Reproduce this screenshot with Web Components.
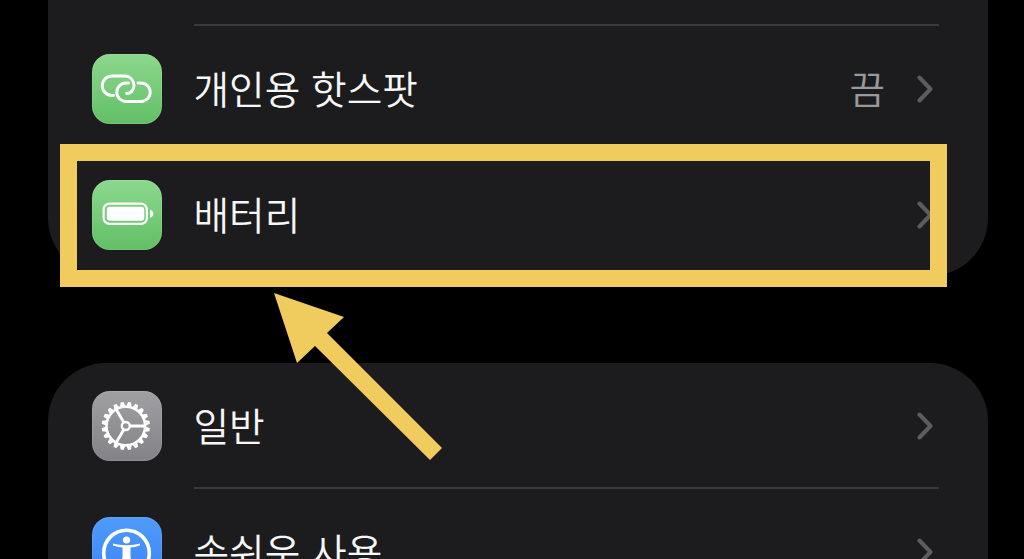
<!DOCTYPE html>
<html lang="ko">
<head>
<meta charset="utf-8">
<title>설정</title>
<style>
html, body { margin: 0; height: 100%; background: #000; overflow: hidden; }
</style>
</head>
<body>
<settings-screen>
  <settings-card class="first">
    <settings-row divider stub></settings-row>
    <settings-row label="개인용 핫스팟" value="끔"><app-icon slot="icon" kind="link"></app-icon></settings-row>
    <settings-row label="배터리"><app-icon slot="icon" kind="battery"></app-icon></settings-row>
  </settings-card>
  <settings-card>
    <settings-row label="일반" divider><app-icon slot="icon" kind="gear"></app-icon></settings-row>
    <settings-row label="손쉬운 사용"><app-icon slot="icon" kind="access"></app-icon></settings-row>
  </settings-card>
  <callout-mark slot="overlay"></callout-mark>
</settings-screen>

<script>
class SettingsScreen extends HTMLElement {
    constructor() {
        super();
        this.attachShadow({ mode: 'open' }).innerHTML = `
        <style>
        :host {
            display: flex;
            flex-direction: column;
            gap: 85px;
            position: relative;
            width: 1024px;
            height: 559px;
            padding: 0 36px 0 48px;
            box-sizing: border-box;
            overflow: hidden;
            background: #000;
            font-family: "Noto Sans CJK KR", "Noto Sans", sans-serif;
        }
        </style>
        <slot></slot>
        <slot name="overlay"></slot>`;
    }
}
customElements.define('settings-screen', SettingsScreen);

class SettingsCard extends HTMLElement {
    constructor() {
        super();
        this.attachShadow({ mode: 'open' }).innerHTML = `
        <style>
        :host {
            display: flex;
            flex-direction: column;
            flex: none;
            background: #1c1c1e;
            border-radius: 58px;
        }
        :host(.first) { border-radius: 0 0 58px 58px; height: 276px; margin-bottom: 2px; }
        </style>
        <slot></slot>`;
    }
}
customElements.define('settings-card', SettingsCard);

class SettingsRow extends HTMLElement {
    constructor() {
        super();
        this.attachShadow({ mode: 'open' });
    }

    connectedCallback() {
        this.render();
    }

    render() {
        var label = this.getAttribute('label') || '';
        var value = this.getAttribute('value');
        var stub = this.hasAttribute('stub');
        this.shadowRoot.innerHTML = `
        <style>
        :host {
            display: flex;
            flex: none;
            height: ${stub ? 26 : 126}px;
            padding-left: 43.5px;
        }
        .icon { flex: none; width: 70px; align-self: center; display: flex; }
        .body {
            flex: 1;
            display: flex;
            align-items: center;
            margin: 0 49px 0 32px;
            padding-right: 6px;
        }
        :host([divider]) .body { box-shadow: inset 0 -2px 0 #3a3a3c; }
        .label, .value { font-size: 38.7px; line-height: 48px; font-weight: 350; padding-bottom: 4px; white-space: nowrap; }
        .label { flex: 1; color: #f6f6f7; }
        .value { color: #98989d; margin-right: 32px; }
        svg { display: block; flex: none; }
        </style>
        <div class="icon"><slot name="icon"></slot></div>
        <div class="body">
            ${stub ? '' : `<span class="label">${label}</span>`}
            ${value ? `<span class="value">${value}</span>` : ''}
            ${stub ? '' : `<svg width="16" height="28" viewBox="0 0 16 28"><path d="M2.5 2.5 13.5 14 2.5 25.5" fill="none" stroke="#5d5d60" stroke-width="4" stroke-linecap="round" stroke-linejoin="round"/></svg>`}
        </div>`;
    }
}
customElements.define('settings-row', SettingsRow);

// 20 teeth, trapezoid, with the ring's hole cut out
function gearTeeth(cx, cy) {
    var d = '';
    var pt = (r, deg) => {
        var a = deg * Math.PI / 180;
        return (cx + r * Math.cos(a)).toFixed(2) + ' ' + (cy + r * Math.sin(a)).toFixed(2);
    };
    for (var i = 0; i < 20; i++) {
        var c = 9 + i * 18;
        d += (i ? 'L' : 'M') + pt(20.6, c - 7) + 'L' + pt(24.2, c - 3.6) + 'L' + pt(24.2, c + 3.6) + 'L' + pt(20.6, c + 7);
    }
    return d + `ZM${cx + 18} ${cy}A18 18 0 1 0 ${cx - 18} ${cy}A18 18 0 1 0 ${cx + 18} ${cy}Z`;
}

const ICONS = {
    link: `<g fill="none" stroke="#fff" stroke-width="2.900" stroke-linecap="round">
        <path d="M21.500 41.500H20A9.750 9.750 0 0 1 20 22H33C38 22 42 26.500 42 31.500C42 36.500 38.500 39.500 34.500 39.500"/>
        <path d="M36.500 29H34A9.250 9.250 0 0 0 34 47.500H49A9.250 9.250 0 0 0 49 29H46"/>
    </g>`,
    battery: `<rect x="11.600" y="23.600" width="43.300" height="20.300" rx="6" fill="none" stroke="#fff" stroke-width="2.200"/>
        <rect x="14.800" y="26.800" width="37.500" height="14" rx="3" fill="#fff"/>
        <path d="M58 29.500C60.500 30.800 61.500 32.300 61.500 33.800S60.500 36.800 58 38Z" fill="#fff"/>`,
    gear: `<path d="${gearTeeth(33.8, 35)}" fill="#fff" fill-rule="evenodd"/>
        <g fill="none" stroke="#fff">
        <circle cx="33.800" cy="35" r="4" stroke-width="2.400"/>
        <path d="M37.800 35H53M31.800 31.500 24 18M31.800 38.500 24 52" stroke-width="2.800"/>
    </g>`,
    access: `<circle cx="34.500" cy="36" r="22.800" fill="none" stroke="#fff" stroke-width="3.600"/>
        <circle cx="34.500" cy="23" r="3.600" fill="#fff"/>
        <path d="M21 28.500C25 29.800 28 30.500 30.500 30.500V40L27.500 53H31L34.500 43 38 53H41.500L38.500 40V30.500C41 30.500 44 29.800 48 28.500V26.500C44 27.800 39.500 28.200 34.500 28.200S25 27.800 21 26.500Z" fill="#fff"/>`
};
const ICON_FILLS = {
    link: ['#8cd88d', '#62bf66'],
    battery: ['#8cd88d', '#62bf66'],
    gear: ['#a0a0a3', '#838387'],
    access: ['#4f9bfb', '#3a82f6']
};

class AppIcon extends HTMLElement {
    constructor() {
        super();
        this.attachShadow({ mode: 'open' });
    }

    connectedCallback() {
        var kind = this.getAttribute('kind');
        var fill = ICON_FILLS[kind];
        this.shadowRoot.innerHTML = `
        <style>
        :host {
            display: block;
            width: 70px;
            height: 70px;
            border-radius: 18px;
            background: linear-gradient(${fill[0]}, ${fill[1]});
            box-shadow: inset 0 0 0 1px rgba(255,255,255,.1);
        }
        svg { display: block; }
        </style>
        <svg width="70" height="70" viewBox="0 0 70 70">${ICONS[kind]}</svg>`;
    }
}
customElements.define('app-icon', AppIcon);

// yellow box and arrow drawn over the list
class CalloutMark extends HTMLElement {
    constructor() {
        super();
        this.attachShadow({ mode: 'open' }).innerHTML = `
        <style>
        :host { display: block; position: absolute; left: 0; top: 0; width: 1024px; height: 559px; pointer-events: none; }
        svg { display: block; }
        </style>
        <svg width="1024" height="559" viewBox="0 0 1024 559">
            <rect x="68.500" y="152.500" width="870" height="126" fill="none" stroke="#f0cb5e" stroke-width="17"/>
            <path d="M274 293 344 317 327 333 442 448 430 460 315 346 297 363Z" fill="#f0cb5e"/>
        </svg>`;
    }
}
customElements.define('callout-mark', CalloutMark);
</script>
</body>
</html>
